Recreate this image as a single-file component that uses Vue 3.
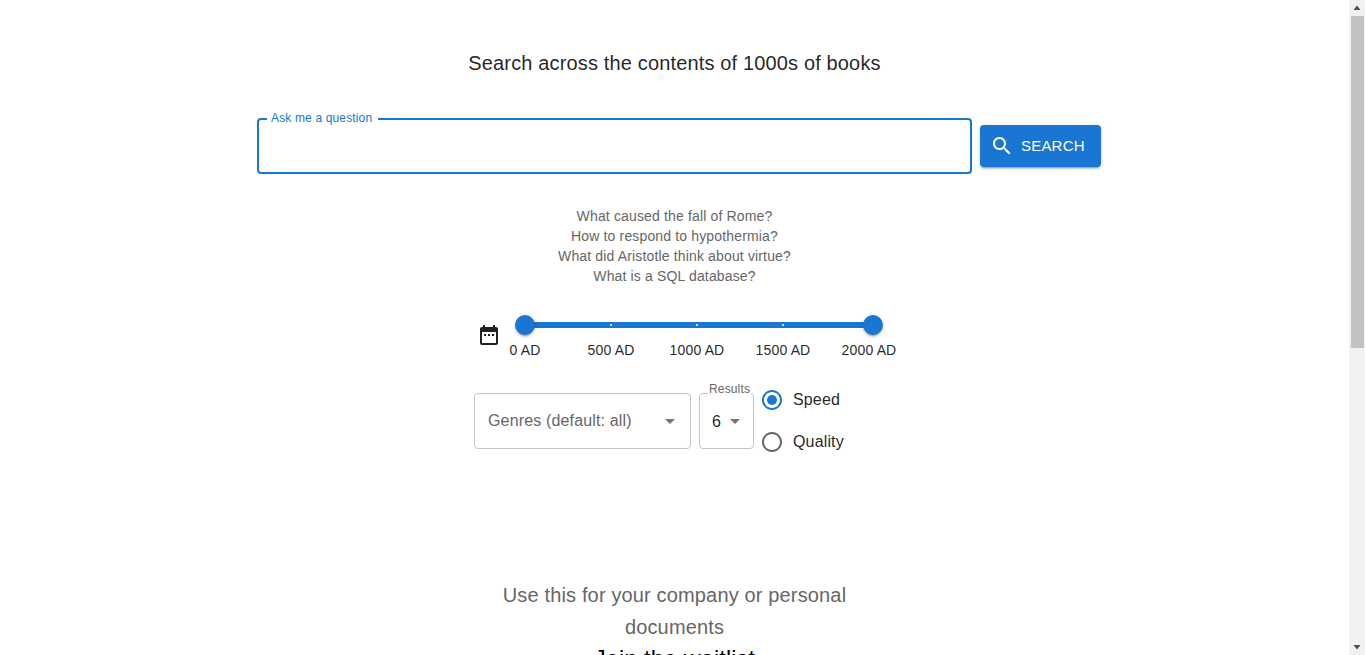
<script setup>
const marks = [
  { label: '0 AD', left: 0 },
  { label: '500 AD', left: 86 },
  { label: '1000 AD', left: 172 },
  { label: '1500 AD', left: 258 },
  { label: '2000 AD', left: 344 },
]
const hints = [
  'What caused the fall of Rome?',
  'How to respond to hypothermia?',
  'What did Aristotle think about virtue?',
  'What is a SQL database?',
]
</script>

<template>
  <div class="page">
    <main class="main">
      <h1 class="title">Search across the contents of 1000s of books</h1>

      <div class="search-row">
        <fieldset class="outline">
          <legend class="notch">Ask me a question</legend>
        </fieldset>
        <button class="search-btn" type="button">
          <svg class="icon" viewBox="0 0 24 24" width="24" height="24"><path fill="currentColor" d="M15.5 14h-.79l-.28-.27C15.41 12.59 16 11.11 16 9.5 16 5.91 13.09 3 9.5 3S3 5.91 3 9.5 5.91 16 9.5 16c1.61 0 3.09-.59 4.23-1.57l.27.28v.79l5 4.99L20.49 19l-4.99-5zm-6 0C7.01 14 5 11.99 5 9.5S7.01 5 9.5 5 14 7.01 14 9.5 11.99 14 9.5 14z"/></svg>
          <span class="btn-label">SEARCH</span>
        </button>
      </div>

      <div class="hints">
        <div v-for="h in hints" :key="h" class="hint">{{ h }}</div>
      </div>

      <div class="slider-row">
        <svg class="calendar" viewBox="0 0 24 24" width="24" height="24"><path fill="#212121" d="M9 11H7v2h2v-2zm4 0h-2v2h2v-2zm4 0h-2v2h2v-2zm2-7h-1V2h-2v2H8V2H6v2H5c-1.11 0-1.99.9-1.99 2L3 20c0 1.1.89 2 2 2h14c1.1 0 2-.9 2-2V6c0-1.1-.9-2-2-2zm0 16H5V9h14v11z"/></svg>
        <div class="slider">
          <div class="track"></div>
          <span v-for="m in marks.slice(1, 4)" :key="'t' + m.left" class="tick" :style="{ left: m.left + 'px' }"></span>
          <span class="thumb thumb-start"></span>
          <span class="thumb thumb-end"></span>
          <span v-for="m in marks" :key="m.label" class="mark" :style="{ left: m.left + 'px' }">{{ m.label }}</span>
        </div>
      </div>

      <div class="controls">
        <div class="select genres">
          <span class="placeholder">Genres (default: all)</span>
          <svg viewBox="0 0 24 24" width="24" height="24"><path fill="#757575" d="M7 10l5 5 5-5z"/></svg>
        </div>
        <div class="select results">
          <span class="floating">Results</span>
          <span class="value">6</span>
          <svg viewBox="0 0 24 24" width="24" height="24"><path fill="#757575" d="M7 10l5 5 5-5z"/></svg>
        </div>
        <div class="radios">
          <label class="radio">
            <svg viewBox="0 0 24 24" width="24" height="24"><path fill="#1976d2" d="M12 2C6.48 2 2 6.48 2 12s4.48 10 10 10 10-4.48 10-10S17.52 2 12 2zm0 18c-4.42 0-8-3.58-8-8s3.58-8 8-8 8 3.58 8 8-3.58 8-8 8z"/><circle cx="12" cy="12" r="5" fill="#1976d2"/></svg>
            <span>Speed</span>
          </label>
          <label class="radio">
            <svg viewBox="0 0 24 24" width="24" height="24"><path fill="#666" d="M12 2C6.48 2 2 6.48 2 12s4.48 10 10 10 10-4.48 10-10S17.52 2 12 2zm0 18c-4.42 0-8-3.58-8-8s3.58-8 8-8 8 3.58 8 8-3.58 8-8 8z"/></svg>
            <span>Quality</span>
          </label>
        </div>
      </div>

      <div class="promo">
        <p class="promo-text">Use this for your company or personal documents</p>
        <p class="waitlist">Join the waitlist</p>
      </div>
    </main>

    <aside class="scrollbar">
      <div class="sb-btn"><svg viewBox="0 0 16 16" width="16" height="16"><path fill="#505050" d="M8 5.5 4.5 10h7z"/></svg></div>
      <div class="sb-track"><div class="sb-thumb"></div></div>
      <div class="sb-btn"><svg viewBox="0 0 16 16" width="16" height="16"><path fill="#505050" d="M4.5 6h7L8 10.5z"/></svg></div>
    </aside>
  </div>
</template>

<style>
html, body { margin: 0; overflow: hidden; background: #fff; }
</style>

<style scoped>
.page {
  display: flex;
  width: 1365px;
  height: 655px;
  overflow: hidden;
  font-family: "Liberation Sans", Arial, sans-serif;
  letter-spacing: 0.15px;
  color: rgba(0, 0, 0, 0.87);
  background: #fff;
}
.main {
  flex: 1;
  min-width: 0;
  display: flex;
  flex-direction: column;
  align-items: center;
  overflow: hidden;
}
.title {
  margin: 47px 0 0;
  font-size: 20px;
  font-weight: 400;
  line-height: 32px;
}
.search-row {
  align-self: flex-start;
  display: flex;
  align-items: flex-start;
  gap: 8px;
  margin: 32px 0 0 257px;
  height: 63px;
}
.outline {
  box-sizing: border-box;
  width: 715px;
  height: 63px;
  margin: 0;
  padding: 0 8px;
  border: 2px solid #1976d2;
  border-radius: 4px;
}
.notch {
  padding: 0 6px 2px 4px;
  font-size: 12px;
  line-height: 14px;
  color: #1976d2;
}
.search-btn {
  display: flex;
  align-items: center;
  gap: 7px;
  width: 121px;
  height: 42px;
  margin-top: 14px;
  padding: 0 0 0 10px;
  box-sizing: border-box;
  border: 0;
  border-radius: 4px;
  background: #1976d2;
  color: #fff;
  font-family: inherit;
  font-size: 15px;
  letter-spacing: 0.2px;
  box-shadow: 0 3px 1px -2px rgba(0,0,0,.2), 0 2px 2px 0 rgba(0,0,0,.14), 0 1px 5px 0 rgba(0,0,0,.12);
}
.icon { flex: none; }
.btn-label { padding-bottom: 2px; }
.hints {
  margin-top: 32px;
  text-align: center;
  font-size: 14px;
  line-height: 20px;
  color: #666;
}
.slider-row {
  align-self: flex-start;
  display: flex;
  margin: 20px 0 0 477px;
  height: 65px;
}
.calendar { margin-top: 17px; flex: none; }
.slider {
  position: relative;
  margin-left: 24px;
  width: 348px;
  height: 65px;
}
.track {
  position: absolute;
  left: 0;
  right: 0;
  top: 16px;
  height: 6px;
  background: #1976d2;
}
.tick {
  position: absolute;
  top: 18px;
  width: 2px;
  height: 2px;
  margin-left: -1px;
  background: #cfe2f5;
}
.thumb {
  position: absolute;
  top: 9px;
  width: 20px;
  height: 20px;
  margin-left: -10px;
  border-radius: 50%;
  background: #1976d2;
  box-shadow: 0 3px 1px -2px rgba(0,0,0,.2), 0 2px 2px 0 rgba(0,0,0,.14), 0 1px 5px 0 rgba(0,0,0,.12);
}
.thumb-start { left: 0; }
.thumb-end { left: 348px; }
.mark {
  position: absolute;
  top: 34px;
  transform: translateX(-50%);
  font-size: 14px;
  line-height: 20px;
  white-space: nowrap;
}
.controls {
  align-self: flex-start;
  display: flex;
  gap: 8px;
  margin: 22px 0 0 474px;
}
.select {
  position: relative;
  box-sizing: border-box;
  display: flex;
  align-items: center;
  height: 56px;
  border: 1px solid #c4c4c4;
  border-radius: 4px;
}
.genres {
  width: 217px;
  padding: 0 8px 0 13px;
  justify-content: space-between;
}
.placeholder { font-size: 16px; color: #666; }
.results { width: 55px; padding-left: 12px; }
.results svg { flex: none; }
.value { font-size: 16px; width: 11px; flex: none; padding-top: 1px; }
.floating {
  position: absolute;
  left: 8px;
  top: -12px;
  padding: 0 1px;
  background: #fff;
  font-size: 12px;
  line-height: 14px;
  color: #666;
}
.radios {
  display: flex;
  flex-direction: column;
  gap: 18px;
  margin: -5px 0 0 -2px;
}
.radio {
  display: flex;
  align-items: center;
  gap: 9px;
  height: 24px;
  font-size: 16px;
}
.promo {
  width: 400px;
  margin-top: 125px;
  text-align: center;
}
.promo-text {
  margin: 0;
  font-size: 20px;
  line-height: 32px;
  color: #666;
}
.waitlist {
  margin: 0;
  font-size: 23.4px;
  line-height: 32px;
  color: #000;
}
.scrollbar {
  flex: none;
  width: 16px;
  height: 655px;
  display: flex;
  flex-direction: column;
  background: #f1f1f1;
}
.sb-btn { height: 16px; flex: none; }
.sb-btn svg { display: block; }
.sb-track { flex: 1; }
.sb-thumb {
  width: 13px;
  margin-left: 2px;
  height: 332px;
  background: #c1c1c1;
}
</style>
